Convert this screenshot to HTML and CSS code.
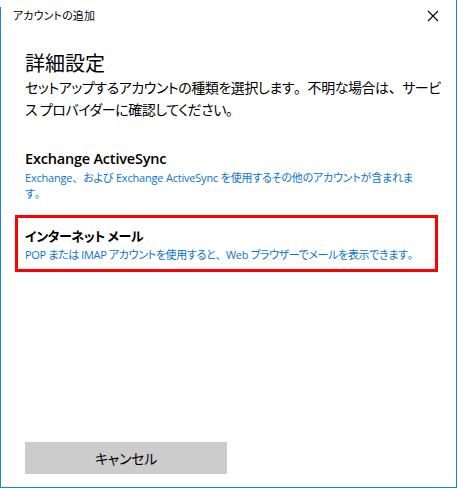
FILE: index.html
```html
<!DOCTYPE html>
<html lang="ja">
<head>
<meta charset="utf-8">
<title>アカウントの追加</title>
<link rel="stylesheet" href="styles.css">
</head>
<body>
<div class="window">
  <div class="titlebar">
    <span class="title">アカウントの追加</span>
    <svg class="close" width="12" height="12" viewBox="0 0 12 12"><path d="M1 1 L11 11 M11 1 L1 11" stroke="#000" stroke-width="1.1" fill="none"/></svg>
  </div>
  <div class="content">
    <h1 class="heading">詳細設定</h1>
    <p class="intro"><span class="line">セットアップするアカウントの種類を選択します<span class="fw">。</span>不明な場合は<span class="fw">、</span>サービ</span><span class="line">ス プロバイダーに確認してください<span class="fw">。</span></span></p>
    <div class="options">
      <div class="option">
        <div class="opt-title">Exchange ActiveSync</div>
        <div class="opt-desc wide"><span class="line">Exchange<span class="fw">、</span>および Exchange ActiveSync を使用するその他のアカウントが含まれま</span><span class="line">す<span class="fw">。</span></span></div>
      </div>
      <div class="option selected">
        <div class="opt-title jp">インターネット メール</div>
        <div class="opt-desc"><span class="line">POP または IMAP アカウントを使用すると<span class="fw">、</span>Web ブラウザーでメールを表示できます<span class="fw">。</span></span></div>
      </div>
    </div>
    <div class="footer">
      <button class="cancel">キャンセル</button>
    </div>
  </div>
</div>
</body>
</html>
```
FILE: styles.css
```css
html, body {
  margin: 0;
  padding: 0;
  background: #ffffff;
}
body {
  font-family: "Noto Sans CJK JP", "Noto Sans", sans-serif;
  font-feature-settings: "palt";
  color: #000;
}
.fw {
  font-feature-settings: normal;
}
.window {
  position: relative;
  width: 457px;
  height: 488px;
  box-sizing: border-box;
  border-right: 1px solid #1883d7;
  border-bottom: 1px solid #1883d7;
  display: flex;
  flex-direction: column;
}
.window::before {
  content: "";
  position: absolute;
  left: 0;
  top: 7px;
  bottom: 0;
  width: 1px;
  background: #1883d7;
}
.titlebar {
  height: 32px;
  display: flex;
  align-items: center;
  justify-content: space-between;
  padding: 0 16px 0 13px;
  box-sizing: border-box;
}
.title {
  font-size: 11px;
  letter-spacing: 0.1px;
  line-height: 1;
  margin-top: -1px;
}
.close {
  margin-top: -1px;
  margin-right: 1px;
}
.content {
  flex: 1;
  display: flex;
  flex-direction: column;
  padding: 18px 0 0 25px;
}
.heading {
  font-size: 20px;
  font-weight: 400;
  margin: 0;
  line-height: 26px;
}
.intro {
  margin: 0;
  font-size: 14px;
  letter-spacing: -0.45px;
  line-height: 22px;
}
.line {
  display: block;
  white-space: nowrap;
}
.options {
  display: flex;
  flex-direction: column;
  margin-top: 25px;
  margin-left: -10px;
  gap: 10px;
}
.option {
  width: 423px;
  box-sizing: border-box;
  padding: 0 0 0 7px;
  border: 3px solid transparent;
}
.option.selected {
  border-color: #ff0000;
  padding: 7px 0 6px 7px;
}
.opt-title {
  font-family: "Open Sans", "Noto Sans CJK JP", sans-serif;
  font-weight: 600;
  font-size: 14.5px;
  line-height: 22px;
  letter-spacing: -0.2px;
}
.opt-title.jp {
  font-family: "Noto Sans CJK JP", sans-serif;
  font-size: 13px;
  letter-spacing: -0.4px;
}
.opt-desc {
  font-family: "Open Sans", "Noto Sans CJK JP", sans-serif;
  font-size: 11px;
  line-height: 16px;
  color: #0a74d0;
  letter-spacing: -0.35px;
}
.opt-desc.wide {
  letter-spacing: -0.2px;
}
.footer {
  margin-top: auto;
  padding-bottom: 13px;
}
.cancel {
  width: 202px;
  height: 32px;
  border: none;
  background: #cccccc;
  font-family: "Noto Sans CJK JP", sans-serif;
  font-feature-settings: "palt";
  font-size: 14px;
  letter-spacing: -0.3px;
  color: #000;
  padding: 0;
}
```
